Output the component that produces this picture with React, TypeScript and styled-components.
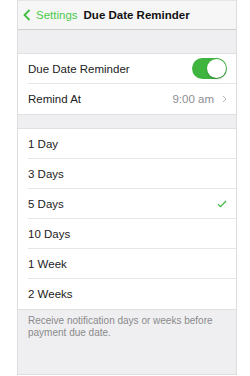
import styled, { createGlobalStyle } from "styled-components";

const GlobalStyle = createGlobalStyle`
    html, body {
        margin: 0;
        padding: 0;
        background: #ffffff;
    }
    body {
        font-family: "Liberation Sans", Arial, sans-serif;
    }
`;

const GREEN = "#3fb53f";

const Page = styled.div`
    width: 250px;
    height: 376px;
    padding-left: 17px;
    box-sizing: border-box;
`;
const Screen = styled.div`
    width: 220px;
    height: 375px;
    box-sizing: border-box;
    background: #efeff2;
    border-left: 1px solid #dedede;
    border-right: 1px solid #dedede;
    border-bottom: 1px solid #dedede;
    display: flex;
    flex-direction: column;
`;
const NavBar = styled.div`
    height: 30px;
    box-sizing: border-box;
    background: #f6f6f6;
    border-top: 1px solid #e6e6e6;
    border-bottom: 1px solid #cfcfcf;
    display: flex;
    align-items: center;
    padding-left: 5px;
    gap: 4px;
    font-size: 11.5px;
`;
const BackLink = styled.span`
    display: flex;
    align-items: center;
    gap: 5px;
    color: #4cc94c;
`;
const Title = styled.span`
    font-weight: bold;
    color: #111;
    margin-left: 2px;
`;
const Spacer = styled.div<{ $h: number }>`
    height: ${p => p.$h}px;
    flex-shrink: 0;
`;
const Group = styled.div`
    background: #ffffff;
    border-top: 1px solid #e0e0e0;
    border-bottom: 1px solid #e0e0e0;
`;
const Row = styled.div`
    padding-left: 10px;
`;
const RowInner = styled.div<{ $last?: boolean }>`
    height: 30px;
    box-sizing: border-box;
    display: flex;
    align-items: center;
    justify-content: space-between;
    padding-right: 9px;
    font-size: 11.5px;
    color: #222;
    border-bottom: ${p => (p.$last ? "none" : "1px solid #e6e6e6")};
`;
const Detail = styled.span`
    display: flex;
    align-items: center;
    gap: 8px;
    color: #8e8e93;
`;
const Toggle = styled.div<{ $on: boolean }>`
    width: 35px;
    height: 21px;
    border-radius: 11px;
    background: ${p => (p.$on ? GREEN : "#e5e5e5")};
    position: relative;
    flex-shrink: 0;
`;
const Knob = styled.div`
    position: absolute;
    top: 1px;
    right: 1px;
    width: 19px;
    height: 19px;
    border-radius: 50%;
    background: #ffffff;
    box-shadow: 0 1px 2px rgba(0, 0, 0, 0.25);
`;
const Footer = styled.div`
    padding: 5px 10px;
    font-size: 10px;
    line-height: 12px;
    color: #8a8a8a;
`;

const options = ["1 Day", "3 Days", "5 Days", "10 Days", "1 Week", "2 Weeks"];
const selected = "5 Days";

const App = () => (
    <>
        <GlobalStyle />
        <Page>
            <Screen>
                <NavBar>
                    <BackLink>
                        <svg width="8" height="12" viewBox="0 0 8 12">
                            <path d="M6.5 1 L1.5 6 L6.5 11" fill="none" stroke="#3fbf3f" strokeWidth="1.8" />
                        </svg>
                        Settings
                    </BackLink>
                    <Title>Due Date Reminder</Title>
                </NavBar>

                <Spacer $h={23} />
                <Group>
                    <Row>
                        <RowInner>
                            Due Date Reminder
                            <Toggle $on><Knob /></Toggle>
                        </RowInner>
                    </Row>
                    <Row>
                        <RowInner $last>
                            Remind At
                            <Detail>
                                9:00 am
                                <svg width="5" height="8" viewBox="0 0 5 8">
                                    <path d="M0.8 0.8 L4 4 L0.8 7.2" fill="none" stroke="#b8b8bc" strokeWidth="1" />
                                </svg>
                            </Detail>
                        </RowInner>
                    </Row>
                </Group>

                <Spacer $h={13} />
                <Group>
                    {options.map((o, i) => (
                        <Row key={o}>
                            <RowInner $last={i === options.length - 1}>
                                {o}
                                {o === selected && (
                                    <svg width="10" height="8" viewBox="0 0 10 8">
                                        <path d="M1 4.2 L3.6 6.6 L9 1" fill="none" stroke={GREEN} strokeWidth="1.2" />
                                    </svg>
                                )}
                            </RowInner>
                        </Row>
                    ))}
                </Group>

                <Footer>Receive notification days or weeks before payment due date.</Footer>
            </Screen>
        </Page>
    </>
);

export default App;
